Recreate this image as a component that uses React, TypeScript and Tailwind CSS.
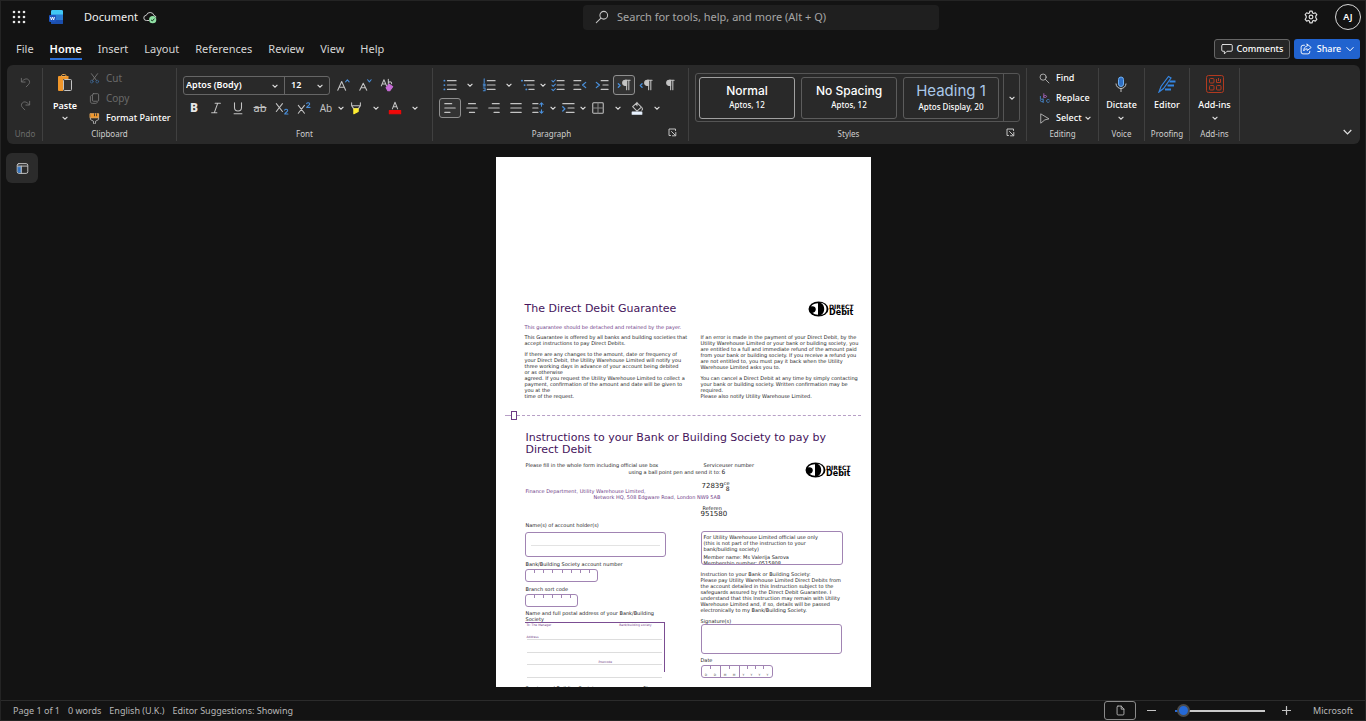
import React from "react";

type Kids = { children?: React.ReactNode };

function Svg({ size = 14, box = 16, children }: Kids & { size?: number; box?: number }) {
  return (
    <svg
      width={size}
      height={size}
      viewBox={`0 0 ${box} ${box}`}
      fill="none"
      stroke="#c4c4c4"
      strokeWidth="1.2"
      strokeLinecap="round"
      strokeLinejoin="round"
      className="shrink-0"
      aria-hidden="true"
    >
      {children}
    </svg>
  );
}

const BLUE = "#4a90dc";

function Chevron() {
  return (
    <svg width="6" height="6" viewBox="0 0 6 6" fill="none" stroke="#e0e0e0" strokeWidth="1.1" className="shrink-0" aria-hidden="true">
      <path d="M.6 1.8 3 4.2 5.4 1.8" />
    </svg>
  );
}

function Tool({ label, active, children }: Kids & { label: string; active?: boolean }) {
  return (
    <button
      type="button"
      aria-label={label}
      className={
        active
          ? "flex h-5 w-[22px] shrink-0 items-center justify-center rounded-[3px] border border-[#8f8f8f] bg-[#333333]"
          : "flex h-5 w-[22px] shrink-0 items-center justify-center rounded-[3px]"
      }
    >
      {children}
    </button>
  );
}

function Drop({ label, wide }: { label: string; wide?: boolean }) {
  return (
    <button
      type="button"
      aria-label={label}
      className={wide ? "flex h-5 w-[17px] shrink-0 items-center justify-center" : "flex h-5 w-2 shrink-0 items-center justify-center"}
    >
      <Chevron />
    </button>
  );
}

function Group({ label, className, dim, launcher, children }: Kids & { label: string; className: string; dim?: boolean; launcher?: boolean }) {
  return (
    <section aria-label={label} className={"flex shrink-0 flex-col border-r border-[#404040] pb-px " + className}>
      <div className="flex-1">{children}</div>
      <div className={launcher ? "relative flex h-3 items-center justify-center pr-[18px]" : "flex h-3 items-center justify-center"}>
        <span className={dim ? "text-[8px] leading-3 text-[#6b6b6b]" : "text-[8px] leading-3 text-[#cfcfcf]"}>{label}</span>
        {launcher && (
          <button type="button" aria-label={label + " options"} className="absolute right-[11px] top-0">
            <Svg size={9} box={9}>
              <path d="M2.5 7.5H1V1h6.5v1.5M3.5 3.5l4 4M7.8 4.5v3.3H4.5" strokeWidth="1" />
            </Svg>
          </button>
        )}
      </div>
    </section>
  );
}

function Lines({ rows }: { rows: [number, number, number][] }) {
  return (
    <>
      {rows.map(([a, y, b]) => (
        <path key={y} d={`M${a} ${y}H${b}`} />
      ))}
    </>
  );
}

function Pilcrow({ arrow }: { arrow?: "in" | "out" }) {
  return (
    <Svg>
      <path d="M9.5 2.5h5.500M11 2.500v11M13.500 2.500v11" />
      <path d="M9.500 2.500a3 3 0 0 0 0 6H11v-6z" fill="#c4c4c4" />
      {arrow === "in" && <path d="M1.500 6.500 3.500 8.500l-2 2" stroke={BLUE} strokeWidth="1.500" />}
      {arrow === "out" && <path d="M3.500 6.500l-2 2 2 2" stroke={BLUE} strokeWidth="1.500" />}
    </Svg>
  );
}

function TitleBar() {
  return (
    <header className="flex h-8 items-center">
      <div className="flex w-[582px] items-center">
        <button type="button" aria-label="App launcher" className="ml-[11px] flex">
          <svg width="14" height="14" viewBox="0 0 14 14" fill="#e6e6e6" aria-hidden="true">
            {[2, 7, 12].map((y) => [2, 7, 12].map((x) => <circle key={x + "-" + y} cx={x} cy={y} r="1.3" />))}
          </svg>
        </button>
        <svg width="16" height="16" viewBox="0 0 16 16" className="ml-[22px]" aria-hidden="true">
          <rect x="3" y="1" width="12" height="14" rx="1.5" fill="#2b7cd3" />
          <path d="M3 5.5V2.5A1.5 1.5 0 0 1 4.5 1h9A1.5 1.5 0 0 1 15 2.5v3z" fill="#41c8f5" />
          <path d="M3 11h12v2.5a1.500 1.500 0 0 1-1.500 1.500h-9A1.500 1.500 0 0 1 3 13.500z" fill="#1b4fae" />
          <rect x="1" y="6" width="7" height="7" rx="1" fill="#1e56c0" />
          <path d="m2.500 8 .900 3 1.100-3 1.100 3 .900-3" fill="none" stroke="#fff" strokeWidth=".9" />
        </svg>
        <h1 className="ml-5 text-[11px] leading-4 text-[#f0f0f0]">Document</h1>
        <svg width="14" height="14" viewBox="0 0 14 14" fill="none" stroke="#c8c8c8" className="ml-[5px]" aria-hidden="true">
          <path d="M6 10.500H3.500a2.600 2.600 0 0 1-.2-5.200 4 4 0 0 1 7.700.2c1 .1 1.800.7 2 1.700" />
          <circle cx="9.700" cy="9.700" r="3.600" fill="#8fe0a4" stroke="none" />
          <path d="m8 9.800 1.300 1.200 2.200-2.400" stroke="#17351f" />
        </svg>
      </div>
      <label className="flex h-[25px] w-[356px] items-center gap-2 rounded bg-[#1f1f1f] px-3">
        <Svg size={14}>
          <circle cx="10" cy="6" r="4.400" />
          <path d="M6.800 9.200 1.500 14.500" />
        </Svg>
        <input
          type="search"
          aria-label="Search"
          placeholder="Search for tools, help, and more (Alt + Q)"
          className="min-w-0 flex-1 bg-transparent text-[11px] leading-4 outline-none placeholder:text-[#a6a6a6]"
        />
      </label>
      <div className="ml-auto flex items-center gap-[17px] pr-1">
        <button type="button" aria-label="Settings">
          <svg width="14" height="14" viewBox="0 0 24 24" fill="none" stroke="#e0e0e0" strokeWidth="2" aria-hidden="true" className="block">
            <path d="M10 2h4l.6 3 2 1 2.800-1.300 2.600 3.300-1.800 2.600v2.600l1.800 2.700-2.600 3.200-2.800-1.200-2 1-.6 3.100h-4l-.6-3.100-2-1-2.800 1.200L2 15.900l1.800-2.700v-2.600L2 8l2.600-3.300L7.400 6l2-1z" strokeLinejoin="round" />
            <circle cx="12" cy="12" r="3.200" />
          </svg>
        </button>
        <button type="button" aria-label="Account" className="flex h-[26px] w-[26px] items-center justify-center rounded-full border border-[#d8d8d8] text-[9px] font-semibold text-white">
          AJ
        </button>
      </div>
    </header>
  );
}

function TabBar() {
  const tabs = ["File", "Home", "Insert", "Layout", "References", "Review", "View", "Help"];
  return (
    <nav aria-label="Ribbon tabs" className="flex h-[31px] items-center pl-[15px] pr-[5px]">
      <div className="flex items-center gap-4">
        {tabs.map((t) => (
          <a
            key={t}
            href={"#" + t.toLowerCase()}
            className={
              t === "Home"
                ? "border-b-2 border-[#2b6fd6] pb-px pt-[3px] text-[11px] font-semibold leading-4 text-white"
                : "border-b-2 border-transparent pb-px pt-[3px] text-[11px] leading-4 text-[#d6d6d6]"
            }
          >
            {t}
          </a>
        ))}
      </div>
      <div className="ml-auto flex gap-1">
        <button type="button" className="flex h-5 w-[76px] items-center justify-center gap-1 rounded-[3px] border border-[#666666] bg-[#262626] text-[9px] font-medium text-white">
          <Svg size={12}>
            <path d="M2.500 2h11A1.500 1.500 0 0 1 15 3.500v6a1.500 1.500 0 0 1-1.500 1.500H8l-3.500 3.500V11h-2A1.500 1.500 0 0 1 1 9.500v-6A1.500 1.500 0 0 1 2.500 2z" stroke="#f0f0f0" />
          </Svg>
          Comments
        </button>
        <button type="button" className="flex h-5 w-[66px] items-center justify-center gap-[5px] rounded-[3px] bg-[#2163cf] text-[9px] font-medium text-white">
          <Svg size={12}>
            <path d="M6 3H4a2.500 2.500 0 0 0-2.500 2.500V12A2.500 2.500 0 0 0 4 14.500h6.500A2.500 2.500 0 0 0 13 12v-1M9.500 1.500 15 6l-5.500 4V7.800C7.500 7.800 6 8.500 5 10.500 5 7 6.500 4.500 9.500 4z" stroke="#fff" />
          </Svg>
          Share
          <svg width="8" height="6" viewBox="0 0 8 6" fill="none" stroke="#fff" aria-hidden="true">
            <path d="M.500 1.200 4 4.800l3.500-3.600" />
          </svg>
        </button>
      </div>
    </nav>
  );
}

function Undo() {
  return (
    <Group label="Undo" dim className="w-[35px]">
      <div className="flex flex-col items-center gap-3 pt-[9px]">
        <button type="button" aria-label="Undo">
          <svg width="11" height="11" viewBox="0 0 12 12" fill="none" stroke="#6f6f6f" className="block" aria-hidden="true">
            <path d="M1.500 1v4.500H6M1.800 5.300C4 2.500 7 1 9.300 3c2 2 1.200 4-.3 5.500L6.500 11" />
          </svg>
        </button>
        <button type="button" aria-label="Redo">
          <svg width="11" height="11" viewBox="0 0 12 12" fill="none" stroke="#6f6f6f" className="block" aria-hidden="true">
            <path d="M10.500 1v4.500H6M10.200 5.300C8 2.500 5 1 2.700 3c-2 2-1.200 4 .3 5.500L5.500 11" />
          </svg>
        </button>
      </div>
    </Group>
  );
}

function Clipboard() {
  return (
    <Group label="Clipboard" className="w-[134px]">
      <div className="flex gap-3 pl-[10px]">
        <button type="button" className="flex w-6 flex-col items-center self-start pt-[6px] text-[9px] font-semibold leading-3 text-white">
          <svg width="18" height="18" viewBox="0 0 18 18" className="mb-2" aria-hidden="true">
            <path d="M3 2h9.500v3H7v12H3a1 1 0 0 1-1-1V3a1 1 0 0 1 1-1z" fill="#f0962a" />
            <path d="M5.500 2.500a1.500 1.500 0 0 1 1.500-2h1.500a1.500 1.500 0 0 1 1.500 2z" fill="#2b2b2b" stroke="#f0a94e" />
            <rect x="7.500" y="5.500" width="8" height="11" rx="1" fill="#333" stroke="#c4c4c4" />
          </svg>
          Paste
          <span className="flex h-3 items-center">
            <Chevron />
          </span>
        </button>
        <div className="flex flex-col text-[10px] leading-4">
          <button type="button" className="flex h-5 items-center gap-[6px] text-[#6a6a6a]" disabled>
            <Svg size={11}>
              <g stroke="#7d7d7d">
                <path d="M3.500 1 11 11M12.500 1 5 11" />
                <circle cx="4" cy="12.500" r="2" stroke="#3a628e" />
                <circle cx="12" cy="12.500" r="2" stroke="#3a628e" />
              </g>
            </Svg>
            Cut
          </button>
          <button type="button" className="flex h-5 items-center gap-[6px] text-[#6a6a6a]" disabled>
            <Svg size={11}>
              <g stroke="#7d7d7d">
                <rect x="5" y="1" width="9" height="11" rx="1.500" />
                <path d="M3.500 3.500C2.500 3.700 2 4.500 2 5.500V12c0 2 1 3 3 3h5c1 0 1.500-.5 2-1.200" />
              </g>
            </Svg>
            Copy
          </button>
          <button type="button" className="flex h-5 items-center gap-[6px] text-[9px] font-medium text-white">
            <Svg size={11}>
              <path d="M2 1h12v6H2z" fill="#f0962a" stroke="#f3b160" />
              <path d="M8 1v3M11 1v3" stroke="#2b2b2b" />
              <path d="M2 7.500v2L6.500 12v2.500a1.500 1.500 0 0 0 3 0V12L14 9.500v-2" />
            </Svg>
            Format Painter
          </button>
        </div>
      </div>
    </Group>
  );
}

function FontGroup() {
  return (
    <Group label="Font" className="w-64">
      <div className="flex flex-col gap-[3px] pl-[6px] pt-[7px]">
        <div className="flex h-5 items-center">
          <div className="mr-[2px] flex h-[19px] w-[147px] rounded-[3px] border border-[#666666] text-[9px] font-semibold text-white">
            <div className="relative flex-1 border-r border-[#666666]">
              <select aria-label="Font name" className="h-full w-full appearance-none bg-transparent pl-[2px] outline-none">
                <option>Aptos (Body)</option>
              </select>
              <span className="pointer-events-none absolute right-[6px] top-[6px]">
                <Chevron />
              </span>
            </div>
            <div className="relative w-11">
              <select aria-label="Font size" className="h-full w-full appearance-none bg-transparent pl-[6px] outline-none">
                <option>12</option>
              </select>
              <span className="pointer-events-none absolute right-[6px] top-[6px]">
                <Chevron />
              </span>
            </div>
          </div>
          <Tool label="Grow font">
            <Svg>
              <path d="M2 14 6.500 4 11 14M3.500 10.500h6" />
              <path d="m11 4.500 2-2.500 2 2.500" stroke={BLUE} />
            </Svg>
          </Tool>
          <Tool label="Shrink font">
            <Svg>
              <path d="M2 14 6 6l4 8M3.500 11.200h5" />
              <path d="m11 2 2 2.500L15 2" stroke={BLUE} />
            </Svg>
          </Tool>
          <Tool label="Clear formatting">
            <Svg>
              <path d="M1.500 9 4.500 2l3 7M2.500 6.800h4M9.500 1.500V8M9.500 5.500c2-2 4-1 3.800 1" />
              <path d="m7 11 3.500-4 4 3-3.300 4.500H9z" fill="#c86dd7" stroke="#c86dd7" />
            </Svg>
          </Tool>
        </div>
        <div className="flex items-center">
          <Tool label="Bold">
            <span className="text-[12px] font-extrabold text-[#e6e6e6]">B</span>
          </Tool>
          <Tool label="Italic">
            <Svg>
              <path d="M7 2.500h6M3 13.500h6M10 2.500l-4 11" />
            </Svg>
          </Tool>
          <Tool label="Underline">
            <Svg>
              <path d="M4 2v5.500a4 4 0 0 0 8 0V2M3.500 14.500h9" />
            </Svg>
          </Tool>
          <Tool label="Strikethrough">
            <span className="text-[11px] text-[#c4c4c4] line-through">ab</span>
          </Tool>
          <Tool label="Subscript">
            <Svg>
              <path d="m1.500 3 7 9M8.500 3l-7 9" />
              <path d="M11 10.500c.5-1.500 3.500-1.500 3.500.3 0 1.500-2 2-3.500 4h3.800" stroke={BLUE} />
            </Svg>
          </Tool>
          <Tool label="Superscript">
            <Svg>
              <path d="m1.500 5 7 9M8.500 5l-7 9" />
              <path d="M11 3c.5-1.500 3.500-1.500 3.500.3 0 1.500-2 2-3.500 4h3.800" stroke={BLUE} />
            </Svg>
          </Tool>
          <Tool label="Change case">
            <span className="text-[10px] text-[#c4c4c4]">Ab</span>
          </Tool>
          <Drop label="Change case options" />
          <Tool label="Highlight">
            <Svg>
              <path d="M3 2v3.500L5.500 9h5L13 5.500V2M3 5.500h10" />
              <path d="M5.500 9v5.500L10.500 12V9z" fill="#ffee32" stroke="#ffee32" />
            </Svg>
          </Tool>
          <Drop label="Highlight colours" wide />
          <Tool label="Font colour">
            <Svg>
              <path d="m5 9 3-7.500L11 9M6 6.500h4" />
              <path d="M1.500 11h13v3.500h-13z" fill="#f00808" stroke="#f00808" />
            </Svg>
          </Tool>
          <Drop label="Font colours" wide />
        </div>
      </div>
    </Group>
  );
}

function ParagraphGroup() {
  return (
    <Group label="Paragraph" launcher className="w-64">
      <div className="flex flex-col gap-[3px] pl-[6px] pt-[7px]">
        <div className="flex items-center">
          <Tool label="Bullets">
            <Svg>
              <Lines rows={[[5, 3, 15], [5, 8, 15], [5, 13, 15]]} />
              <path d="M1.500 3h.2M1.500 8h.2M1.500 13h.2" stroke={BLUE} strokeWidth="2" />
            </Svg>
          </Tool>
          <Drop label="Bullet styles" wide />
          <Tool label="Numbering">
            <Svg>
              <Lines rows={[[6, 3, 15], [6, 8, 15], [6, 13, 15]]} />
              <path d="M2.500 1v4M1.500 7h2v2h-2M1.500 11.500h2v3h-2" stroke={BLUE} />
            </Svg>
          </Tool>
          <Drop label="Number styles" wide />
          <Tool label="Multilevel list">
            <Svg>
              <Lines rows={[[4, 3, 15], [7, 8, 15], [9, 13, 15]]} />
              <path d="M1 3h.2M4 8h.2M6 13h.2" stroke={BLUE} strokeWidth="2" />
            </Svg>
          </Tool>
          <Drop label="Multilevel styles" />
          <Tool label="Checklist">
            <Svg>
              <Lines rows={[[7, 3, 15], [7, 8, 15], [7, 13, 15]]} />
              <path d="m1 3 1.500 1.500L5 2M1 8l1.500 1.500L5 7M1 13l1.500 1.500L5 12" stroke={BLUE} />
            </Svg>
          </Tool>
          <Tool label="Decrease indent">
            <Svg>
              <Lines rows={[[1, 3, 9], [1, 8, 7], [1, 13, 9]]} />
              <path d="M14.500 5 11 8l3.500 3" stroke={BLUE} strokeWidth="1.500" />
            </Svg>
          </Tool>
          <Tool label="Increase indent">
            <Svg>
              <Lines rows={[[7, 3, 15], [9, 8, 15], [7, 13, 15]]} />
              <path d="M1.500 5 5 8l-3.500 3" stroke={BLUE} strokeWidth="1.500" />
            </Svg>
          </Tool>
          <Tool label="Left-to-right" active>
            <Pilcrow arrow="in" />
          </Tool>
          <Tool label="Right-to-left">
            <Pilcrow arrow="out" />
          </Tool>
          <Tool label="Show marks">
            <Pilcrow />
          </Tool>
        </div>
        <div className="flex items-center">
          <Tool label="Align left" active>
            <Svg>
              <Lines rows={[[2, 3, 10], [2, 8, 14], [2, 13, 8]]} />
            </Svg>
          </Tool>
          <Tool label="Align centre">
            <Svg>
              <Lines rows={[[4, 3, 12], [2, 8, 14], [5, 13, 11]]} />
            </Svg>
          </Tool>
          <Tool label="Align right">
            <Svg>
              <Lines rows={[[6, 3, 14], [2, 8, 14], [8, 13, 14]]} />
            </Svg>
          </Tool>
          <Tool label="Justify">
            <Svg>
              <Lines rows={[[2, 3, 14], [2, 8, 14], [2, 13, 14]]} />
            </Svg>
          </Tool>
          <Tool label="Line spacing">
            <Svg>
              <Lines rows={[[2, 3, 8], [2, 8, 8], [2, 13, 8]]} />
              <path d="M12 2v4M10.200 3.800 12 2l1.800 1.800M12 14v-4M10.200 12.200 12 14l1.800-1.800" stroke={BLUE} />
            </Svg>
          </Tool>
          <Drop label="Spacing options" />
          <Tool label="Paragraph indent">
            <Svg>
              <Lines rows={[[2, 3, 15], [8, 8, 15], [6, 13, 15]]} />
              <path d="M2 6.500 4.500 9 2 11.500" stroke={BLUE} strokeWidth="1.500" />
            </Svg>
          </Tool>
          <Drop label="Indent options" />
          <Tool label="Borders">
            <Svg>
              <rect x="2" y="2" width="12" height="12" rx="1" />
              <path d="M8 2v12M2 8h12" stroke="#858585" />
            </Svg>
          </Tool>
          <Drop label="Border options" wide />
          <Tool label="Shading">
            <Svg>
              <path d="M8 1.500v4M3 6.500l5-4.500 5 5-5 4.500z" />
              <path d="M13.500 7.500c1 1.500 1 2.500 0 3" />
              <path d="M2.500 12.500h11v2.500h-11z" fill="#e8f2ff" stroke="#e8f2ff" />
            </Svg>
          </Tool>
          <Drop label="Shading options" wide />
        </div>
      </div>
    </Group>
  );
}

function StylesGroup() {
  const card = "flex h-[42px] w-24 flex-col items-center justify-center rounded-[3px] border font-['Inter',sans-serif]";
  const note = "font-['Noto_Sans',sans-serif] text-[8px] font-medium leading-[14px] text-white";
  return (
    <Group label="Styles" launcher className="w-[338px]">
      <div className="pl-[6px] pt-[5px]">
        <div className="flex h-[49px] w-[325px] items-center gap-[6px] rounded-[3px] border border-[#555555] pl-[3px]">
          <button type="button" className={card + " border-[#a0a0a0]"}>
            <span className="text-[12px] font-medium leading-[15px] text-white">Normal</span>
            <span className={note}>Aptos, 12</span>
          </button>
          <button type="button" className={card + " border-[#5c5c5c]"}>
            <span className="text-[12px] font-medium leading-[15px] text-white">No Spacing</span>
            <span className={note}>Aptos, 12</span>
          </button>
          <button type="button" className={card + " border-[#5c5c5c]"}>
            <span className="text-[15px] leading-[19px] text-[#a9c8e8]">Heading 1</span>
            <span className={note}>Aptos Display, 20</span>
          </button>
          <button type="button" aria-label="More styles" className="-ml-[2px] flex h-full flex-1 items-center justify-center border-l border-[#555555]">
            <Chevron />
          </button>
        </div>
      </div>
    </Group>
  );
}

function EditingGroup() {
  const item = "flex h-5 items-center gap-[6px] text-[9px] font-medium leading-4 text-white";
  return (
    <Group label="Editing" className="w-[72px]">
      <div className="flex flex-col pl-3">
        <button type="button" className={item}>
          <Svg size={11}>
            <circle cx="6" cy="6" r="4.500" />
            <path d="m9.500 9.500 5 5" />
          </Svg>
          Find
        </button>
        <button type="button" className={item}>
          <Svg size={11}>
            <path d="M7 1v5.500M7 4.500c1-1.500 4-1.200 4 .5S8 7 7 6" stroke="#b46ac8" />
            <path d="M6 9.500c-1-1-4-.8-4 1.300s3 2.200 4 1.200M6 8.500V14M15 10c-1.500-1.500-4-.5-4 1.500s2.500 3 4 1.500M2 5v3.500" stroke={BLUE} />
          </Svg>
          Replace
        </button>
        <button type="button" className={item}>
          <Svg size={11}>
            <path d="M3 1.500 14.500 8.500 8.500 10 3 14.500z" />
          </Svg>
          <span className="flex items-center gap-[3px]">
            Select <Chevron />
          </span>
        </button>
      </div>
    </Group>
  );
}

function BigButton({ text, drop, children }: Kids & { text: string; drop?: boolean }) {
  return (
    <button type="button" className="mx-auto flex flex-col items-center pt-[7px] text-[9px] font-medium leading-3 text-white">
      {children}
      <span className="mt-[6px]">{text}</span>
      {drop && (
        <span className="flex h-[14px] items-center">
          <Chevron />
        </span>
      )}
    </button>
  );
}

function Ribbon() {
  return (
    <div role="toolbar" aria-label="Ribbon" className="ml-[6px] mr-[5px] mt-px flex h-[79px] rounded-md bg-[#292929] py-[3px] pl-px">
      <Undo />
      <Clipboard />
      <FontGroup />
      <ParagraphGroup />
      <StylesGroup />
      <EditingGroup />
      <Group label="Voice" className="w-[46px]">
        <BigButton text="Dictate" drop>
          <svg width="18" height="18" viewBox="0 0 18 18" fill="none" aria-hidden="true">
            <rect x="6.500" y="2" width="5" height="9.500" rx="2.500" fill="#2f6fc4" stroke="#6fb0f2" />
            <path d="M4 8.500a5 5 0 0 0 10 0M9 13.500V17" stroke="#c4c4c4" />
          </svg>
        </BigButton>
      </Group>
      <Group label="Proofing" className="w-[45px]">
        <BigButton text="Editor">
          <svg width="18" height="18" viewBox="0 0 18 18" fill="none" aria-hidden="true">
            <path d="M1 17 3 11.500 10.500 1.500l2.500 1.500-7.500 10.500z" stroke="#3585e0" strokeWidth="1.200" />
            <path d="M11.500 6.500h6M9.500 10.500H16M7 14.500h6" stroke="#3585e0" strokeWidth="2.200" />
          </svg>
        </BigButton>
      </Group>
      <Group label="Add-ins" className="w-[50px]">
        <BigButton text="Add-ins" drop>
          <svg width="18" height="18" viewBox="0 0 18 18" fill="none" stroke="#b23a20" aria-hidden="true">
            <rect x=".500" y=".500" width="17" height="17" rx="2" />
            <rect x="3.500" y="3.500" width="4.500" height="4.500" rx="1" />
            <rect x="3.500" y="10.500" width="4.500" height="4.500" rx="1" />
            <rect x="10.500" y="10.500" width="4.500" height="4.500" rx="1" />
            <path d="M10.500 4v3.500h4V4M12.500 3v3" />
          </svg>
        </BigButton>
      </Group>
      <button type="button" aria-label="Collapse ribbon" className="mb-[6px] ml-auto mr-2 self-end">
        <svg width="9" height="6" viewBox="0 0 9 6" fill="none" stroke="#e0e0e0" strokeWidth="1.200" className="block" aria-hidden="true">
          <path d="M.700 1 4.500 4.800 8.300 1" />
        </svg>
      </button>
    </div>
  );
}

function DebitLogo() {
  return (
    <div className="flex h-4 items-center text-black">
      <svg width="21" height="16" viewBox="0 0 21 16" className="shrink-0" aria-hidden="true">
        <ellipse cx="10.500" cy="8" rx="10" ry="7.500" fill="#000" />
        <path d="M10 2.200C7.500 2.300 4.500 3.300 2.800 5.500c2.700-.9 5 .3 5 2.800 0 1.900-1.300 3.300-3.300 3.500 1.400 1.300 3.300 1.900 5.500 2z" fill="#fff" />
        <path d="M12.500 1.800c4 .7 6 3.200 6 6.200s-2 5.500-6 6.200c2.500-1.200 3.700-3.200 3.700-6.200s-1.200-5-3.700-6.200z" fill="#fff" />
      </svg>
      <div className="flex flex-col font-['DejaVu_Sans',sans-serif] font-bold">
        <span className="text-[6px] leading-[7px]">DIRECT</span>
        <span className="text-[8px] leading-[6px]">Debit</span>
      </div>
    </div>
  );
}

function Text({ lines, className = "" }: { lines: string[]; className?: string }) {
  return (
    <p className={"whitespace-nowrap " + className}>
      {lines.map((l) => (
        <span key={l} className="block">
          {l}
        </span>
      ))}
    </p>
  );
}

function Ticks({ count }: { count: number }) {
  return (
    <div className="flex h-[3px] pr-[6px]">
      {Array.from({ length: count }, (_, i) => (
        <span key={i} className="flex-1 border-r border-[#a184b3]" />
      ))}
    </div>
  );
}

const GUARANTEE_LEFT = [
  "If there are any changes to the amount, date or frequency of",
  "your Direct Debit, the Utility Warehouse Limited will notify you",
  "three working days in advance of your account being debited",
  "or as otherwise",
  "agreed. If you request the Utility Warehouse Limited to collect a",
  "payment, confirmation of the amount and date will be given to",
  "you at the",
  "time of the request.",
];

const GUARANTEE_RIGHT = [
  "If an error is made in the payment of your Direct Debit, by the",
  "Utility Warehouse Limited or your bank or building society, you",
  "are entitled to a full and immediate refund of the amount paid",
  "from your bank or building society. If you receive a refund you",
  "are not entitled to, you must pay it back when the Utility",
  "Warehouse Limited asks you to.",
];

const INSTRUCTION = [
  "Instruction to your Bank or Building Society:",
  "Please pay Utility Warehouse Limited Direct Debits from",
  "the account detailed in this Instruction subject to the",
  "safeguards assured by the Direct Debit Guarantee. I",
  "understand that this Instruction may remain with Utility",
  "Warehouse Limited and, if so, details will be passed",
  "electronically to my Bank/Building Society.",
];

function DocumentPage() {
  return (
    <article className="h-full overflow-hidden bg-white pt-[144px] font-['DejaVu_Sans',sans-serif] text-[5px] leading-[6px] text-[#222222]">
      <div className="flex items-center justify-between pl-[29px] pr-[17px]">
        <h2 className="text-[11px] leading-4 text-[#45145c]">The Direct Debit Guarantee</h2>
        <DebitLogo />
      </div>
      <p className="mt-[7px] pl-[29px] text-[#6d3a86]">This guarantee should be detached and retained by the payer.</p>
      <div className="mt-1 grid grid-cols-[176px_1fr] pl-[29px]">
        <div className="flex flex-col gap-[5px]">
          <Text lines={["This Guarantee is offered by all banks and building societies that", "accept instructions to pay Direct Debits."]} />
          <Text lines={GUARANTEE_LEFT} />
        </div>
        <div className="flex flex-col gap-[5px]">
          <Text lines={GUARANTEE_RIGHT} />
          <Text
            lines={[
              "You can cancel a Direct Debit at any time by simply contacting",
              "your bank or building society. Written confirmation may be",
              "required.",
              "Please also notify Utility Warehouse Limited.",
            ]}
          />
        </div>
      </div>
      <div className="mt-3 flex items-center pl-[9px] pr-[10px]">
        <span className="w-[6px] border-t border-dashed border-[#b79fc6]" />
        <span className="h-[9px] w-[6px] border border-[#6d3a86]" />
        <span className="flex-1 border-t border-dashed border-[#b79fc6]" />
      </div>

      <h2 className="mt-3 pl-[30px] text-[11px] leading-3 text-[#45145c]">
        Instructions to your Bank or Building Society to pay by
        <br />
        Direct Debit
      </h2>

      <div className="mt-[6px] grid grid-cols-[175px_1fr] pl-[30px]">
        <div className="flex flex-col">
          <p className="whitespace-nowrap">Please fill in the whole form including official use box</p>
          <p className="mt-px whitespace-nowrap pl-[103px]">using a ball point pen and send it to:</p>
          <div className="mt-[13px] whitespace-nowrap text-[#6d3a86]">
            <p>Finance Department, Utility Warehouse Limited,</p>
            <p className="pl-[68px]">Network HQ, 508 Edgware Road, London NW9 5AB</p>
          </div>
          <p className="mt-[22px]">Name(s) of account holder(s)</p>
          <div className="-ml-px mt-1 h-[25px] w-[141px] rounded-[3px] border border-[#a184b3] px-[5px] pt-3">
            <div className="border-t border-[#e3e3e3]" />
          </div>
          <p className="mt-1 whitespace-nowrap">Bank/Building Society account number</p>
          <div className="-ml-px mt-[2px] h-[13px] w-[73px] rounded-[3px] border border-[#a184b3]">
            <Ticks count={7} />
          </div>
          <p className="mt-1">Branch sort code</p>
          <div className="-ml-px mt-[2px] h-[13px] w-[53px] rounded-[3px] border border-[#a184b3]">
            <Ticks count={5} />
          </div>
          <Text className="mt-[3px]" lines={["Name and full postal address of your Bank/Building", "Society"]} />
          <div className="-ml-px h-[50px] w-[140px] border-r border-t border-[#7b4d92] px-[2px] text-[3px] leading-[4px] text-[#6d3a86]">
            <div className="flex justify-between pr-[10px]">
              <span>To: The Manager</span>
              <span>Bank/building society</span>
            </div>
            <p className="mt-2 border-b border-[#dddddd]">Address</p>
            <div className="h-[13px] border-b border-[#dddddd]" />
            <p className="border-b border-[#dddddd] pl-[72px] pt-[7px]">Postcode</p>
            <div className="h-[13px] border-b border-[#dddddd]" />
          </div>
          <p className="mt-[13px] flex w-[124px] justify-between">
            <span>Service and Building Society</span>
            <span>Ph</span>
          </p>
        </div>
        <div className="flex flex-col">
          <div className="flex justify-between pr-5">
            <div className="w-20">
              <p className="whitespace-nowrap pl-[3px]">Serviceuser number</p>
              <p className="mt-px pl-[21px] text-[6px]">6</p>
              <p className="mt-[7px] flex items-start pl-px text-[7px] leading-[8px]">
                72839
                <span className="-mt-px flex flex-col">
                  <span className="text-[5px] leading-[5px]">ce</span>
                  <span className="pl-[2px] text-[6px] leading-[6px]">8</span>
                </span>
              </p>
              <p className="mt-[13px] pl-[2px]">Referen</p>
              <p className="text-[7px] leading-[6px]">951580</p>
            </div>
            <DebitLogo />
          </div>
          <div className="mt-[14px] h-[34px] w-[142px] overflow-hidden rounded-[3px] border border-[#a184b3] px-[2px] pt-[2px]">
            <Text lines={["For Utility Warehouse Limited official use only", "(this is not part of the instruction to your", "bank/building society)"]} />
            <Text className="mt-[2px]" lines={["Member name: Ms Valerija Sarova", "Membership number: 0515808"]} />
          </div>
          <Text className="mt-[6px]" lines={INSTRUCTION} />
          <p className="mt-[5px]">Signature(s)</p>
          <div className="h-[30px] w-[141px] rounded-[3px] border border-[#a184b3]" />
          <p className="mt-[3px]">Date</p>
          <div className="mt-[2px] flex h-[13px] w-[72px] rounded-[3px] border border-[#a184b3] text-[3px] leading-[3px] text-[#444444]">
            {["DD", "MM", "YYYY"].map((part) => (
              <span key={part} className={part === "YYYY" ? "flex flex-1" : "flex w-[19px] border-r border-[#a184b3]"}>
                {part.split("").map((c, i) => (
                  <span key={i} className="flex flex-1 flex-col justify-between">
                    <span className={i < part.length - 1 ? "h-[3px] border-r border-[#a184b3]" : "h-[3px]"} />
                    <span className="text-center">{c}</span>
                  </span>
                ))}
              </span>
            ))}
          </div>
        </div>
      </div>
    </article>
  );
}

function StatusBar() {
  return (
    <footer className="flex h-5 items-center border-t border-[#2b2b2b] pl-3 pr-3 text-[9px] leading-4 text-[#b8b8b8]">
      <div className="flex gap-2">
        <span>Page 1 of 1</span>
        <span>0 words</span>
        <span>English (U.K.)</span>
        <span>Editor Suggestions: Showing</span>
      </div>
      <div className="ml-auto flex items-center">
        <button type="button" aria-label="Page view" className="flex h-[19px] w-8 items-center justify-center rounded-[3px] border border-[#8a8a8a]">
          <Svg size={11}>
            <path d="M4 1.500h5L13 6v7a1.500 1.500 0 0 1-1.500 1.500h-7A1.500 1.500 0 0 1 3 13V3A1.500 1.500 0 0 1 4.500 1.500M9 1.500V6h4" />
          </Svg>
        </button>
        <button type="button" aria-label="Zoom out" className="ml-[11px] flex">
          <Svg size={9} box={9}>
            <path d="M.500 4.500h8" />
          </Svg>
        </button>
        <input
          type="range"
          aria-label="Zoom"
          min={10}
          max={500}
          defaultValue={20}
          className="ml-[19px] mr-[17px] h-[13px] w-[90px] appearance-none bg-transparent [&::-webkit-slider-runnable-track]:h-[2px] [&::-webkit-slider-runnable-track]:bg-[linear-gradient(to_right,#2569d6_8px,#c9c9c9_8px)] [&::-webkit-slider-thumb]:-mt-[6px] [&::-webkit-slider-thumb]:h-[13px] [&::-webkit-slider-thumb]:w-[13px] [&::-webkit-slider-thumb]:appearance-none [&::-webkit-slider-thumb]:rounded-full [&::-webkit-slider-thumb]:border-2 [&::-webkit-slider-thumb]:border-[#4a4a4a] [&::-webkit-slider-thumb]:bg-[#2569d6]"
        />
        <button type="button" aria-label="Zoom in" className="flex">
          <Svg size={9} box={9}>
            <path d="M.500 4.500h8M4.500.500v8" />
          </Svg>
        </button>
        <span className="ml-[22px]">Microsoft</span>
      </div>
    </footer>
  );
}

export default function App() {
  return (
    <div className="flex h-screen flex-col border border-[#242424] bg-[#131313] font-['Noto_Sans','Open_Sans',sans-serif]">
      <TitleBar />
      <TabBar />
      <Ribbon />
      <main className="grid min-h-0 flex-1 grid-cols-[1fr_375px_1fr] grid-rows-[100%] px-[5px] pb-[13px] pt-[13px]">
        <div>
          <button type="button" aria-label="Navigation pane" className="-mt-1 flex h-[30px] w-8 items-center justify-center rounded-md bg-[#2b2b2b]">
            <Svg size={13}>
              <rect x="1.500" y="2" width="13" height="12" rx="2" />
              <path d="M3 6h3v6.500H3z" fill="#2f6fc4" stroke={BLUE} />
              <path d="M2 5h12M6.500 5v9" />
            </Svg>
          </button>
        </div>
        <DocumentPage />
        <div />
      </main>
      <StatusBar />
    </div>
  );
}
